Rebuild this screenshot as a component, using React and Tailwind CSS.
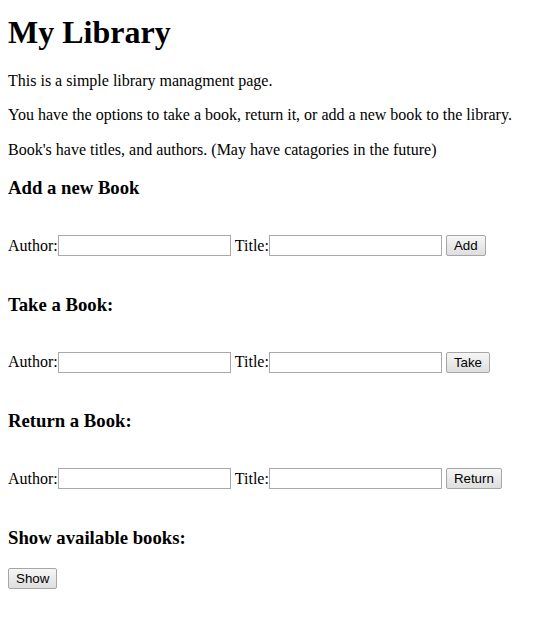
export default function App() {
  const Row = ({ btn, mt = "mt-[18px]" }) => (
    <div className={`${mt} flex items-center h-[22px] leading-none`}>
      <span>Author:</span>
      <input type="text" className="w-[173px] h-[21px] border border-[#a9a9a9] bg-white px-[2px] outline-none" />
      <span className="ml-[4px]">Title:</span>
      <input type="text" className="w-[173px] h-[21px] border border-[#a9a9a9] bg-white px-[2px] outline-none" />
      <button className="ml-[4px] h-[21px] px-[7px] border border-[#a6a6a6] rounded-[2px] bg-gradient-to-b from-[#f6f6f6] to-[#dedede] text-[13.33px] font-['Liberation_Sans',sans-serif] text-black leading-none">
        {btn}
      </button>
    </div>
  );
  const H3 = ({ children, mt }) => (
    <h3 className={`${mt} text-[18.72px] font-bold leading-[21.5px]`}>{children}</h3>
  );
  return (
    <div className="bg-white min-h-[620px] w-[548px] px-2 pt-[14px] font-['Liberation_Serif',serif] text-[16px] text-black leading-[18.4px]">
      <h1 className="text-[32px] font-bold leading-[37px]">My Library</h1>
      <p className="mt-[21px]">This is a simple library managment page.</p>
      <p className="mt-[16px]">You have the options to take a book, return it, or add a new book to the library.</p>
      <p className="mt-[16px]">Book's have titles, and authors. (May have catagories in the future)</p>
      <H3 mt="mt-[18px]">Add a new Book</H3>
      <Row btn="Add" mt="mt-[36px]" />
      <H3 mt="mt-[37px]">Take a Book:</H3>
      <Row btn="Take" mt="mt-[36px]" />
      <H3 mt="mt-[37px]">Return a Book:</H3>
      <Row btn="Return" mt="mt-[36px]" />
      <H3 mt="mt-[37px]">Show available books:</H3>
      <div className="mt-[20px] flex">
        <button className="h-[21px] px-[7px] border border-[#a6a6a6] rounded-[2px] bg-gradient-to-b from-[#f6f6f6] to-[#dedede] text-[13.33px] font-['Liberation_Sans',sans-serif] text-black leading-none">
          Show
        </button>
      </div>
    </div>
  );
}
